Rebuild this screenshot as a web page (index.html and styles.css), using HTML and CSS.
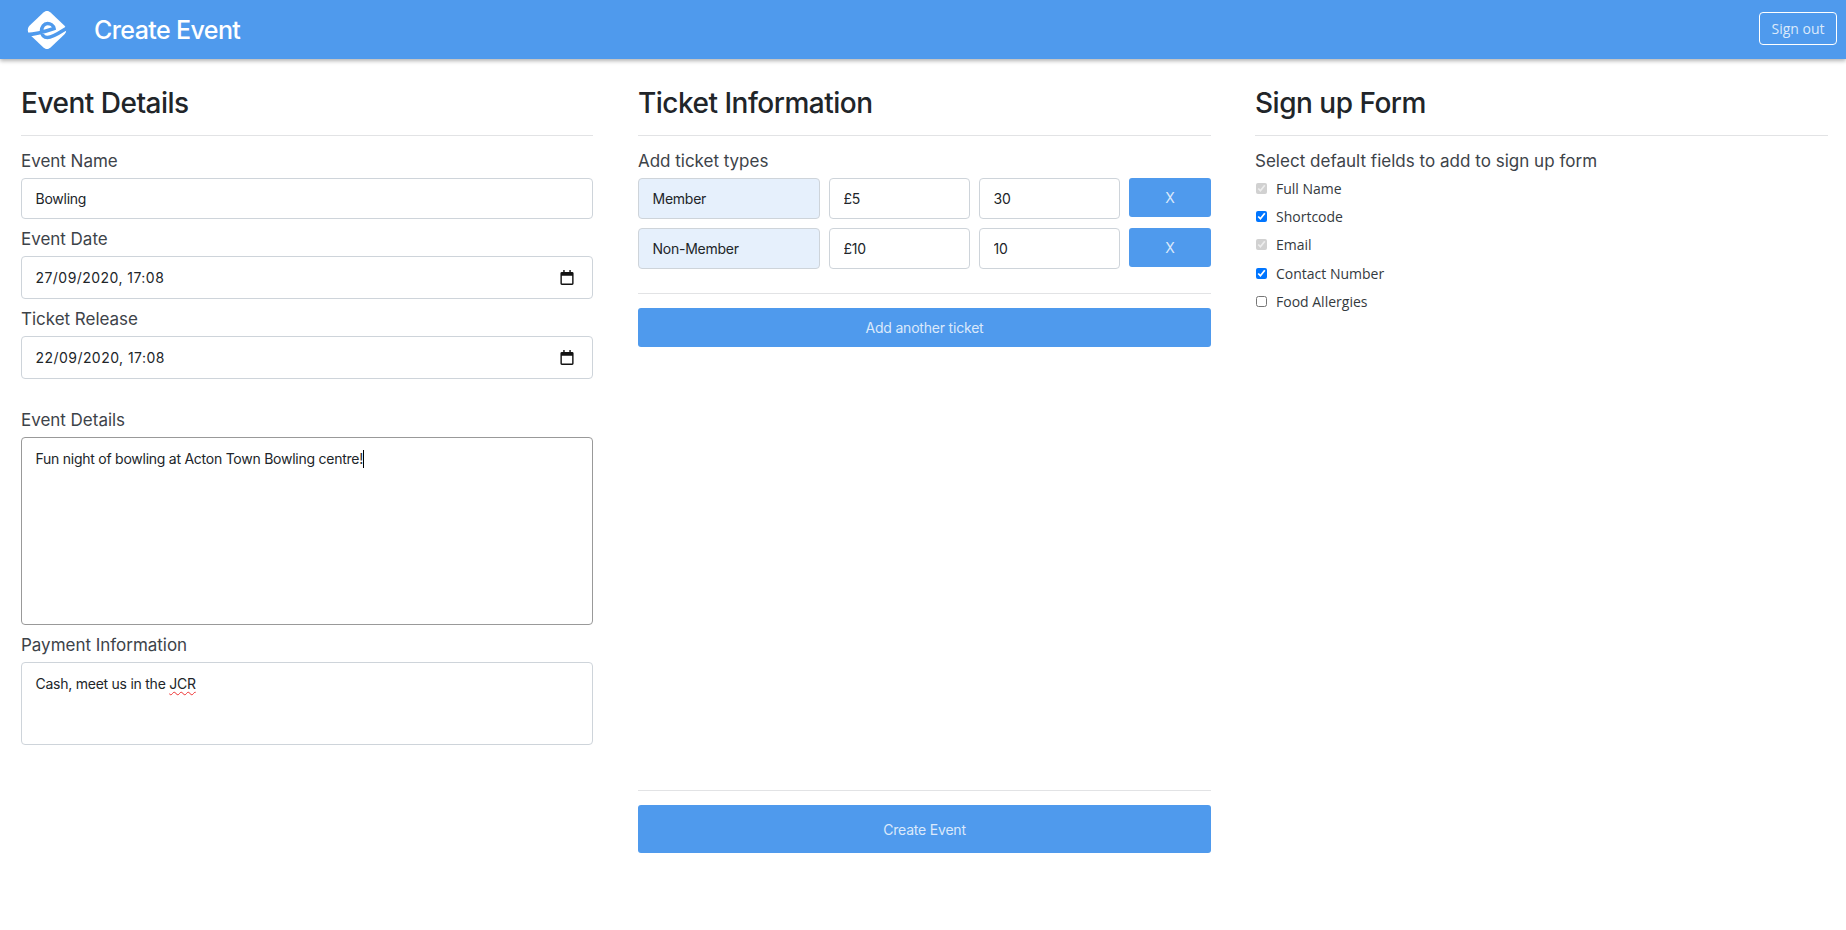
FILE: index.html
```html
<!DOCTYPE html>
<html lang="en">
<head>
<meta charset="utf-8">
<title>Create Event</title>
<link rel="stylesheet" href="styles.css">
</head>
<body>
<header class="topbar">
  <svg class="logo" viewBox="0 0 40 40" aria-hidden="true">
    <path fill="#fff" d="M20 1c1.500 0 2.600.6 3.600 1.500l13.700 13c1.200 1.200 1.900 2.700 1.900 4.500s-.7 3.300-1.900 4.500l-13.700 13c-1 .9-2.100 1.500-3.600 1.500s-2.600-.6-3.600-1.500l-13.700-13C1.500 23.300.8 21.800.8 20s.7-3.300 1.900-4.500l13.700-13C17.400 1.600 18.500 1 20 1z"/>
    <path fill="none" stroke="#4f9aed" stroke-width="3.600" d="M0 24.500C6 24.500 14 23 27 18.500 26.500 15.500 23.500 13.500 20.500 13.500 17 13.500 14.500 17 14.500 21 14.500 25 17 27.500 20.500 27.500 26 27.500 32 23 40 18"/>
  </svg>
  <h1 class="brand">Create Event</h1>
  <button class="signout" type="button">Sign out</button>
</header>

<main class="columns">
  <section class="col">
    <h2 class="heading">Event Details</h2>
    <label class="lab">Event Name</label>
    <input class="field name" type="text" value="Bowling">
    <label class="lab">Event Date</label>
    <div class="field date"><span>27/09/2020, 17:08</span>
      <svg class="cal" viewBox="0 0 14 16" aria-hidden="true"><path d="M3 0h1.500v2h5V0H11v2h1.500A1.500 1.500 0 0 1 14 3.500v11a1.500 1.500 0 0 1-1.500 1.500h-11A1.500 1.500 0 0 1 0 14.500v-11A1.500 1.500 0 0 1 1.500 2H3zM1.500 6v8.500h11V6z"/></svg>
    </div>
    <label class="lab">Ticket Release</label>
    <div class="field date"><span>22/09/2020, 17:08</span>
      <svg class="cal" viewBox="0 0 14 16" aria-hidden="true"><path d="M3 0h1.500v2h5V0H11v2h1.500A1.500 1.500 0 0 1 14 3.500v11a1.500 1.500 0 0 1-1.500 1.500h-11A1.500 1.500 0 0 1 0 14.500v-11A1.500 1.500 0 0 1 1.500 2H3zM1.500 6v8.500h11V6z"/></svg>
    </div>
    <label class="lab lab-spaced">Event Details</label>
    <div class="field area area-big">Fun night of bowling at Acton Town Bowling centre!<span class="caret"></span></div>
    <label class="lab">Payment Information</label>
    <div class="field area area-small">Cash, meet us in the <span class="spell">JCR</span></div>
  </section>

  <section class="col">
    <h2 class="heading">Ticket Information</h2>
    <label class="lab">Add ticket types</label>
    <div class="ticket">
      <input class="field tick tinted" type="text" value="Member">
      <input class="field tick" type="text" value="£5">
      <input class="field tick" type="text" value="30">
      <button class="btn x" type="button">X</button>
    </div>
    <div class="ticket">
      <input class="field tick tinted" type="text" value="Non-Member">
      <input class="field tick" type="text" value="£10">
      <input class="field tick" type="text" value="10">
      <button class="btn x" type="button">X</button>
    </div>
    <hr class="rule rule-a">
    <button class="btn add" type="button">Add another ticket</button>
    <div class="spacer"></div>
    <hr class="rule">
    <button class="btn create" type="button">Create Event</button>
  </section>

  <section class="col">
    <h2 class="heading">Sign up Form</h2>
    <label class="lab lab-form">Select default fields to add to sign up form</label>
    <ul class="checks">
      <li><input type="checkbox" checked disabled><span>Full Name</span></li>
      <li><input type="checkbox" checked><span>Shortcode</span></li>
      <li><input type="checkbox" checked disabled><span>Email</span></li>
      <li><input type="checkbox" checked><span>Contact Number</span></li>
      <li><input type="checkbox"><span>Food Allergies</span></li>
    </ul>
  </section>
</main>
</body>
</html>
```

FILE: styles.css
```css
* { box-sizing: border-box; }
html, body { margin: 0; padding: 0; background: #fff; }
body {
  height: 930px;
  overflow: hidden;
  font-family: "Inter", "Liberation Sans", sans-serif;
  color: #212529;
}
.topbar {
  height: 59px;
  background: #4f9aed;
  display: flex;
  align-items: center;
  padding: 0 9px 0 27px;
  box-shadow: 0 2px 4px rgba(0,0,0,.3);
  position: relative;
}
.logo { width: 40px; height: 40px; display: block; }
.brand {
  margin: 0 0 0 27px;
  font-size: 25px;
  font-weight: 500;
  color: #fff;
  letter-spacing: -.6px;
}
.signout {
  margin-left: auto;
  margin-top: -2px;
  width: 78px;
  height: 33px;
  background: transparent;
  border: 1px solid #fff;
  border-radius: 4px;
  color: #dbe9fb;
  font: 14px "Open Sans", sans-serif;
  padding: 0;
}
.columns {
  display: grid;
  grid-template-columns: 617px 617px 573px;
  padding-left: 21px;
}
.col { display: flex; flex-direction: column; align-items: stretch; padding-right: 44px; }
.col:first-child { padding-right: 45px; }
.col:last-child { padding-right: 0; }
.heading {
  margin: 27px 0 0;
  height: 50px;
  line-height: 34px;
  font-size: 28px;
  font-weight: 500;
  letter-spacing: -.5px;
  color: #212529;
  border-bottom: 1px solid #e2e3e5;
}
.lab {
  display: block;
  height: 24px;
  margin: 8px 0 5px;
  line-height: 24px;
  font-size: 17px;
  color: #3d4349;
  font-weight: 400;
  letter-spacing: -.02px;
}
.heading + .lab { margin-top: 13px; }
.lab-spaced { margin-top: 29px; }
.lab-form { margin-bottom: 1.500px; letter-spacing: .02px; }
.field {
  display: block;
  width: 100%;
  border: 1px solid #ced4da;
  border-radius: 4px;
  background: #fff;
  font: 14px "Inter", sans-serif;
  letter-spacing: -.25px;
  color: #212529;
  padding: 0 13.500px;
  outline: none;
}
.name { height: 41px; }
.date {
  height: 43px;
  display: flex;
  align-items: center;
  justify-content: space-between;
  padding-right: 18.500px;
}
.date span { letter-spacing: .45px; }
.cal { width: 14px; height: 15px; display: block; fill: #111; }
.area { padding-top: 11px; line-height: 20px; }
.area-big { height: 188px; border-color: #999; }
.area-small { height: 83px; }
.caret { display: inline-block; width: 1px; height: 18px; background: #000; vertical-align: -4px; }
.spell { text-decoration: underline wavy #e33 1px; text-underline-offset: 2px; }
.ticket {
  display: grid;
  grid-template-columns: 182px 141px 141px 82px;
  column-gap: 9px;
  align-items: start;
}
.ticket + .ticket { margin-top: 9px; }
.tick { height: 41px; }
.tinted { background: #e6f0fc; }
.btn {
  border: 0;
  border-radius: 3px;
  background: #4f9aed;
  color: #dbe9fb;
  font: 14px "Inter", sans-serif;
  letter-spacing: -.2px;
  padding: 0;
}
.x { height: 39px; }
.rule { border: 0; border-top: 1px solid #e2e3e5; margin: 0; }
.rule-a { margin-top: 24px; }
.add { height: 39px; margin-top: 14px; }
.spacer { height: 443px; }
.create { height: 48px; margin-top: 14px; }
.checks { list-style: none; margin: 0; padding: 0; }
.checks li {
  display: flex;
  align-items: center;
  height: 28.200px;
  font: 14px "Open Sans", sans-serif;
  color: #343a40;
}
.checks input { width: 11px; height: 11px; margin: 0 9px 0 1px; accent-color: #0075ff; }
```
